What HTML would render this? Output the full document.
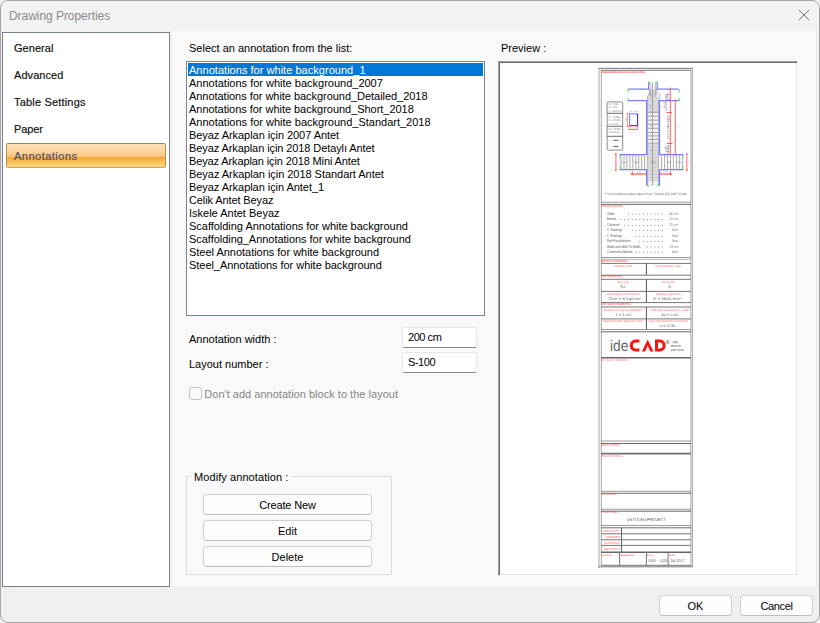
<!DOCTYPE html>
<html><head><meta charset="utf-8">
<style>
html,body{margin:0;padding:0;}
body{width:820px;height:623px;overflow:hidden;background:#efeff1;font-family:"Liberation Sans",sans-serif;position:relative;}
#win{position:absolute;left:0;top:0;width:818px;height:621px;border:1px solid #a6a6a6;border-radius:8px;background:#f0f0f0;overflow:hidden;}
#title{position:absolute;left:0;top:0;width:100%;height:30px;background:#f3f3f3;}
.t{position:absolute;white-space:nowrap;font-size:11px;line-height:13px;color:#000;transform-origin:0 0;}
.m{position:absolute;white-space:nowrap;font-size:11px;line-height:13px;color:#111;-webkit-text-stroke:0.18px #111;}
#left{position:absolute;left:1px;top:31px;width:166px;height:553px;border:1px solid #76808e;background:#fff;}
#sel{position:absolute;left:3px;top:110px;width:158px;height:23px;border:1px solid #b8924f;border-top-color:#a08460;border-bottom-color:#c9a468;border-radius:2px;
 background:linear-gradient(to bottom,#fddfb8 0,#fcd7a5 25%,#fbc683 55%,#f7a93a 57%,#f9b54a 70%,#fcca68 85%,#fdd67c 100%);}
#content{position:absolute;left:169px;top:30px;width:646px;height:556px;background:#f9f9f9;border-right:1px solid #e9e9e9;border-bottom:1px solid #e7e7e7;box-shadow:0 1px 0 #f6f6f6;}
#list{position:absolute;left:185px;top:60px;width:297px;height:253px;background:#fff;border:1px solid #7a8391;}
.row{position:absolute;left:1px;width:295px;height:13px;}
.btn{position:absolute;box-sizing:border-box;border:1px solid #d0d0d0;border-bottom-color:#bdbdbd;border-radius:4px;background:#fdfdfd;font-size:11px;line-height:13px;text-align:center;color:#000;}
.inp{position:absolute;box-sizing:border-box;border:1px solid #e6e6e6;border-bottom:1px solid #868686;border-radius:2px;background:#fff;}
</style></head><body>
<div id="win">
 <div id="title"></div>
 <div class="m" style="left:8px;top:8px;color:#8a8a8a;-webkit-text-stroke:0;font-size:12px;line-height:14px;letter-spacing:-0.05px;">Drawing Properties</div>
 <svg style="position:absolute;left:797px;top:8px" width="12" height="12" viewBox="0 0 12 12"><path d="M1 1 L11 11 M11 1 L1 11" stroke="#767676" stroke-width="1" fill="none"/></svg>

 <div id="content"><div style="position:absolute;left:1px;top:0;width:1px;height:100%;background:#e9e9e9;"></div></div>
 <div id="left">
  <div id="sel"></div>
  <div class="m" style="left:11px;top:9px;letter-spacing:0.04px;">General</div>
  <div class="m" style="left:11px;top:36px;letter-spacing:0.07px;">Advanced</div>
  <div class="m" style="left:11px;top:63px;letter-spacing:0.18px;">Table Settings</div>
  <div class="m" style="left:11px;top:90px;letter-spacing:-0.10px;">Paper</div>
  <div class="m" style="left:11px;top:117px;color:#4d4d55;-webkit-text-stroke-color:#4d4d55;letter-spacing:0.49px;">Annotations</div>
 </div>

 <div class="t" style="left:188px;top:41px;">Select an annotation from the list:</div>
 <div id="list">
  <div class="row" style="top:1px;background:#0078d7;"></div>
  <div class="t li" style="left:2px;top:2px;color:#fff;letter-spacing:0.030px;">Annotations for white background_1</div>
  <div class="t li" style="left:2px;top:15px;color:#000;">Annotations for white background_2007</div>
  <div class="t li" style="left:2px;top:28px;color:#000;letter-spacing:-0.040px;">Annotations for white background_Detailed_2018</div>
  <div class="t li" style="left:2px;top:41px;color:#000;letter-spacing:-0.035px;">Annotations for white background_Short_2018</div>
  <div class="t li" style="left:2px;top:54px;color:#000;">Annotations for white background_Standart_2018</div>
  <div class="t li" style="left:2px;top:67px;color:#000;letter-spacing:-0.053px;">Beyaz Arkaplan için 2007 Antet</div>
  <div class="t li" style="left:2px;top:80px;color:#000;letter-spacing:-0.090px;">Beyaz Arkaplan için 2018 Detaylı Antet</div>
  <div class="t li" style="left:2px;top:93px;color:#000;letter-spacing:-0.120px;">Beyaz Arkaplan için 2018 Mini Antet</div>
  <div class="t li" style="left:2px;top:106px;color:#000;letter-spacing:-0.040px;">Beyaz Arkaplan için 2018 Standart Antet</div>
  <div class="t li" style="left:2px;top:119px;color:#000;letter-spacing:-0.050px;">Beyaz Arkaplan için Antet_1</div>
  <div class="t li" style="left:2px;top:132px;color:#000;letter-spacing:-0.110px;">Celik Antet Beyaz</div>
  <div class="t li" style="left:2px;top:145px;color:#000;">Iskele Antet Beyaz</div>
  <div class="t li" style="left:2px;top:158px;color:#000;letter-spacing:-0.025px;">Scaffolding Annotations for white background</div>
  <div class="t li" style="left:2px;top:171px;color:#000;letter-spacing:-0.040px;">Scaffolding_Annotations for white background</div>
  <div class="t li" style="left:2px;top:184px;color:#000;letter-spacing:-0.020px;">Steel Annotations for white background</div>
  <div class="t li" style="left:2px;top:197px;color:#000;letter-spacing:-0.045px;">Steel_Annotations for white background</div>
 </div>

 <div class="t" style="left:188px;top:332px;">Annotation width :</div>
 <div class="t" style="left:188px;top:357px;">Layout number :</div>
 <div class="inp" style="left:401px;top:326px;width:75px;height:21px;"></div>
 <div class="inp" style="left:401px;top:351px;width:75px;height:21px;"></div>
 <div class="t" style="left:407px;top:330px;letter-spacing:-0.45px;">200 cm</div>
 <div class="t" style="left:407px;top:355px;letter-spacing:-0.45px;">S-100</div>

 <div style="position:absolute;left:188px;top:386px;width:11px;height:11px;border:1px solid #c4c4c4;border-radius:3px;background:#f9f9f9;"></div>
 <div class="t" style="left:203.3px;top:387px;color:#868686;letter-spacing:0.02px;">Don't add annotation block to the layout</div>

 <div style="position:absolute;left:185px;top:475px;width:204px;height:97px;border:1px solid #dcdcdc;"></div>
 <div class="t" style="left:190px;top:470px;background:#f9f9f9;padding:0 3px;letter-spacing:0.08px;">Modify annotation :</div>
 <div class="btn" style="left:202px;top:493px;width:169px;height:21px;padding-top:4px;letter-spacing:-0.15px;">Create New</div>
 <div class="btn" style="left:202px;top:519px;width:169px;height:21px;padding-top:4px;">Edit</div>
 <div class="btn" style="left:202px;top:545px;width:169px;height:21px;padding-top:4px;">Delete</div>

 <div class="t" style="left:500px;top:41px;">Preview :</div>
 <div id="prev" style="position:absolute;left:497px;top:60px;width:298px;height:513px;background:#fff;border:1px solid;border-color:#a0a0a0 #fff #fff #a0a0a0;box-shadow:inset 1px 1px 0 #696969,inset -1px -1px 0 #e3e3e3;"></div>

 <!--SVG-START--><svg style="position:absolute;left:-1px;top:-1px;text-rendering:geometricPrecision" width="820" height="623" viewBox="0 0 820 623" font-family="Liberation Sans">
<line x1="599.0" y1="68.0" x2="599.0" y2="567.0" stroke="#a6a6a6" stroke-width="1.00"/>
<line x1="692.4" y1="68.0" x2="692.4" y2="567.0" stroke="#a6a6a6" stroke-width="1.00"/>
<line x1="601.3" y1="70.0" x2="601.3" y2="565.5" stroke="#a6a6a6" stroke-width="1.00"/>
<line x1="690.9" y1="70.0" x2="690.9" y2="565.5" stroke="#a6a6a6" stroke-width="1.00"/>
<line x1="598.5" y1="68.3" x2="693.0" y2="68.3" stroke="#767676" stroke-width="1.00"/>
<line x1="601.0" y1="70.3" x2="691.0" y2="70.3" stroke="#767676" stroke-width="1.00"/>
<line x1="598.5" y1="566.8" x2="693.0" y2="566.8" stroke="#767676" stroke-width="1.00"/>
<line x1="601.0" y1="259.4" x2="691.0" y2="259.4" stroke="#b4b4b4" stroke-width="1.00"/>
<line x1="601.0" y1="202.2" x2="691.0" y2="202.2" stroke="#808080" stroke-width="0.80"/>
<line x1="601.0" y1="257.5" x2="691.0" y2="257.5" stroke="#808080" stroke-width="0.80"/>
<line x1="601.0" y1="329.5" x2="691.0" y2="329.5" stroke="#808080" stroke-width="0.80"/>
<line x1="601.0" y1="441.0" x2="691.0" y2="441.0" stroke="#808080" stroke-width="0.80"/>
<line x1="601.0" y1="491.3" x2="691.0" y2="491.3" stroke="#808080" stroke-width="0.80"/>
<line x1="601.0" y1="509.3" x2="691.0" y2="509.3" stroke="#808080" stroke-width="0.80"/>
<line x1="601.0" y1="525.5" x2="691.0" y2="525.5" stroke="#808080" stroke-width="0.80"/>
<line x1="601.0" y1="204.4" x2="691.0" y2="204.4" stroke="#505050" stroke-width="0.85"/>
<line x1="601.0" y1="331.8" x2="691.0" y2="331.8" stroke="#505050" stroke-width="0.85"/>
<line x1="601.0" y1="443.5" x2="691.0" y2="443.5" stroke="#505050" stroke-width="0.85"/>
<line x1="601.0" y1="493.3" x2="691.0" y2="493.3" stroke="#505050" stroke-width="0.85"/>
<line x1="601.0" y1="511.2" x2="691.0" y2="511.2" stroke="#505050" stroke-width="0.85"/>
<line x1="601.0" y1="527.8" x2="691.0" y2="527.8" stroke="#505050" stroke-width="0.85"/>
<line x1="601.0" y1="453.6" x2="691.0" y2="453.6" stroke="#707070" stroke-width="1.70"/>
<line x1="601.0" y1="357.7" x2="691.0" y2="357.7" stroke="#666" stroke-width="1.50"/>
<line x1="601.0" y1="263.4" x2="691.0" y2="263.4" stroke="#767676" stroke-width="1.00"/>
<line x1="601.0" y1="275.2" x2="691.0" y2="275.2" stroke="#767676" stroke-width="1.00"/>
<line x1="601.0" y1="279.3" x2="691.0" y2="279.3" stroke="#767676" stroke-width="1.00"/>
<line x1="601.0" y1="291.4" x2="691.0" y2="291.4" stroke="#767676" stroke-width="1.00"/>
<line x1="601.0" y1="302.6" x2="691.0" y2="302.6" stroke="#767676" stroke-width="1.00"/>
<line x1="601.0" y1="307.0" x2="691.0" y2="307.0" stroke="#767676" stroke-width="1.00"/>
<line x1="601.0" y1="318.9" x2="691.0" y2="318.9" stroke="#767676" stroke-width="1.00"/>
<line x1="601.0" y1="533.8" x2="691.0" y2="533.8" stroke="#767676" stroke-width="1.00"/>
<line x1="601.0" y1="539.8" x2="691.0" y2="539.8" stroke="#767676" stroke-width="1.00"/>
<line x1="601.0" y1="545.4" x2="691.0" y2="545.4" stroke="#767676" stroke-width="1.00"/>
<line x1="601.0" y1="565.3" x2="691.0" y2="565.3" stroke="#767676" stroke-width="1.00"/>
<line x1="601.0" y1="552.2" x2="691.0" y2="552.2" stroke="#666" stroke-width="1.40"/>
<line x1="646.4" y1="263.4" x2="646.4" y2="275.2" stroke="#555" stroke-width="1.00"/>
<line x1="646.4" y1="279.3" x2="646.4" y2="302.6" stroke="#555" stroke-width="1.00"/>
<line x1="646.4" y1="307.0" x2="646.4" y2="329.5" stroke="#555" stroke-width="1.00"/>
<line x1="621.5" y1="527.8" x2="621.5" y2="552.2" stroke="#666" stroke-width="1.00"/>
<line x1="619.6" y1="552.2" x2="619.6" y2="565.3" stroke="#777" stroke-width="1.00"/>
<line x1="646.4" y1="552.2" x2="646.4" y2="565.3" stroke="#777" stroke-width="1.00"/>
<line x1="668.1" y1="552.2" x2="668.1" y2="565.3" stroke="#777" stroke-width="1.00"/>
<text x="601.5" y="73.4" font-size="2.50" fill="#ff2020" textLength="43.5" lengthAdjust="spacingAndGlyphs" text-anchor="start" font-weight="bold" font-family="Liberation Sans">REINFORCEMENT DETAILS FOR COLUMN - FOOTING</text>
<polygon points="649.2,89.2 656.8,89.2 657.4,93 660,94.5 660,97.5 658.7,99.5 658.7,185.3 647.3,185.3 647.3,97 649.2,93" fill="#f0f0f0"/>
<rect x="647.9" y="113.0" width="10.3" height="30.0" fill="#f1f1f1"/>
<line x1="649.3" y1="90.2" x2="657.0" y2="90.2" stroke="#a2a2a2" stroke-width="0.45"/>
<line x1="649.3" y1="91.6" x2="657.0" y2="91.6" stroke="#a2a2a2" stroke-width="0.45"/>
<line x1="649.3" y1="93.0" x2="657.0" y2="93.0" stroke="#a2a2a2" stroke-width="0.45"/>
<line x1="649.3" y1="94.5" x2="657.0" y2="94.5" stroke="#a2a2a2" stroke-width="0.45"/>
<line x1="649.3" y1="95.9" x2="657.0" y2="95.9" stroke="#a2a2a2" stroke-width="0.45"/>
<line x1="647.6" y1="97.3" x2="658.5" y2="97.3" stroke="#a2a2a2" stroke-width="0.45"/>
<line x1="647.6" y1="98.7" x2="658.5" y2="98.7" stroke="#a2a2a2" stroke-width="0.45"/>
<line x1="647.6" y1="100.1" x2="658.5" y2="100.1" stroke="#a2a2a2" stroke-width="0.45"/>
<line x1="647.6" y1="101.6" x2="658.5" y2="101.6" stroke="#a2a2a2" stroke-width="0.45"/>
<line x1="647.6" y1="103.0" x2="658.5" y2="103.0" stroke="#a2a2a2" stroke-width="0.45"/>
<line x1="647.6" y1="104.4" x2="658.5" y2="104.4" stroke="#a2a2a2" stroke-width="0.45"/>
<line x1="647.6" y1="105.8" x2="658.5" y2="105.8" stroke="#a2a2a2" stroke-width="0.45"/>
<line x1="647.6" y1="107.2" x2="658.5" y2="107.2" stroke="#a2a2a2" stroke-width="0.45"/>
<line x1="647.6" y1="108.7" x2="658.5" y2="108.7" stroke="#a2a2a2" stroke-width="0.45"/>
<line x1="647.6" y1="110.1" x2="658.5" y2="110.1" stroke="#a2a2a2" stroke-width="0.45"/>
<line x1="647.6" y1="111.5" x2="658.5" y2="111.5" stroke="#a2a2a2" stroke-width="0.45"/>
<line x1="647.4" y1="112.4" x2="658.6" y2="112.4" stroke="#989898" stroke-width="0.90"/>
<line x1="647.4" y1="116.1" x2="658.6" y2="116.1" stroke="#989898" stroke-width="0.90"/>
<line x1="647.4" y1="120.1" x2="658.6" y2="120.1" stroke="#989898" stroke-width="0.90"/>
<line x1="647.4" y1="124.2" x2="658.6" y2="124.2" stroke="#989898" stroke-width="0.90"/>
<line x1="647.4" y1="128.3" x2="658.6" y2="128.3" stroke="#989898" stroke-width="0.90"/>
<line x1="647.4" y1="132.5" x2="658.6" y2="132.5" stroke="#989898" stroke-width="0.90"/>
<line x1="647.4" y1="135.9" x2="658.6" y2="135.9" stroke="#989898" stroke-width="0.90"/>
<line x1="647.4" y1="139.4" x2="658.6" y2="139.4" stroke="#989898" stroke-width="0.90"/>
<line x1="647.4" y1="143.2" x2="658.6" y2="143.2" stroke="#989898" stroke-width="0.90"/>
<line x1="647.6" y1="144.8" x2="658.5" y2="144.8" stroke="#a2a2a2" stroke-width="0.45"/>
<line x1="647.6" y1="146.2" x2="658.5" y2="146.2" stroke="#a2a2a2" stroke-width="0.45"/>
<line x1="647.6" y1="147.6" x2="658.5" y2="147.6" stroke="#a2a2a2" stroke-width="0.45"/>
<line x1="647.6" y1="149.1" x2="658.5" y2="149.1" stroke="#a2a2a2" stroke-width="0.45"/>
<line x1="647.6" y1="150.5" x2="658.5" y2="150.5" stroke="#a2a2a2" stroke-width="0.45"/>
<line x1="647.6" y1="151.9" x2="658.5" y2="151.9" stroke="#a2a2a2" stroke-width="0.45"/>
<line x1="647.6" y1="153.3" x2="658.5" y2="153.3" stroke="#a2a2a2" stroke-width="0.45"/>
<line x1="647.6" y1="154.7" x2="658.5" y2="154.7" stroke="#a2a2a2" stroke-width="0.45"/>
<line x1="647.6" y1="156.2" x2="658.5" y2="156.2" stroke="#a2a2a2" stroke-width="0.45"/>
<line x1="647.6" y1="157.6" x2="658.5" y2="157.6" stroke="#a2a2a2" stroke-width="0.45"/>
<line x1="647.6" y1="159.0" x2="658.5" y2="159.0" stroke="#a2a2a2" stroke-width="0.45"/>
<line x1="647.6" y1="160.4" x2="658.5" y2="160.4" stroke="#a2a2a2" stroke-width="0.45"/>
<line x1="647.6" y1="161.8" x2="658.5" y2="161.8" stroke="#a2a2a2" stroke-width="0.45"/>
<line x1="647.6" y1="163.3" x2="658.5" y2="163.3" stroke="#a2a2a2" stroke-width="0.45"/>
<line x1="647.6" y1="164.7" x2="658.5" y2="164.7" stroke="#a2a2a2" stroke-width="0.45"/>
<line x1="647.6" y1="166.1" x2="658.5" y2="166.1" stroke="#a2a2a2" stroke-width="0.45"/>
<line x1="647.6" y1="167.5" x2="658.5" y2="167.5" stroke="#a2a2a2" stroke-width="0.45"/>
<line x1="647.6" y1="168.9" x2="658.5" y2="168.9" stroke="#a2a2a2" stroke-width="0.45"/>
<line x1="647.6" y1="170.4" x2="658.5" y2="170.4" stroke="#a2a2a2" stroke-width="0.45"/>
<line x1="647.6" y1="171.8" x2="658.5" y2="171.8" stroke="#a2a2a2" stroke-width="0.45"/>
<line x1="647.6" y1="173.2" x2="658.5" y2="173.2" stroke="#a2a2a2" stroke-width="0.45"/>
<line x1="647.6" y1="174.6" x2="658.5" y2="174.6" stroke="#a2a2a2" stroke-width="0.45"/>
<line x1="647.6" y1="176.0" x2="658.5" y2="176.0" stroke="#a2a2a2" stroke-width="0.45"/>
<line x1="647.6" y1="177.5" x2="658.5" y2="177.5" stroke="#a2a2a2" stroke-width="0.45"/>
<line x1="647.6" y1="178.9" x2="658.5" y2="178.9" stroke="#a2a2a2" stroke-width="0.45"/>
<line x1="647.6" y1="180.3" x2="658.5" y2="180.3" stroke="#a2a2a2" stroke-width="0.45"/>
<polyline points="649.2,89.2 649.2,93 647.4,97" fill="none" stroke="#a0a0a0" stroke-width="0.7"/>
<polyline points="656.9,89.2 657.4,93 660,94.5 660,97.5 658.6,99.5" fill="none" stroke="#a8a8a8" stroke-width="0.7"/>
<line x1="647.4" y1="97.0" x2="647.4" y2="185.3" stroke="#a0a0a0" stroke-width="0.70"/>
<line x1="658.6" y1="99.0" x2="658.6" y2="185.3" stroke="#a0a0a0" stroke-width="0.70"/>
<line x1="652.5" y1="82.5" x2="652.5" y2="185.5" stroke="#909090" stroke-width="0.80"/>
<line x1="650.2" y1="82.5" x2="650.2" y2="97.0" stroke="#9a9a9a" stroke-width="0.70"/>
<line x1="655.3" y1="82.5" x2="655.3" y2="97.0" stroke="#9a9a9a" stroke-width="0.70"/>
<line x1="648.6" y1="82.3" x2="648.6" y2="89.2" stroke="#7c7cff" stroke-width="1.25"/>
<line x1="657.2" y1="82.3" x2="657.2" y2="89.2" stroke="#7c7cff" stroke-width="1.25"/>
<line x1="647.8" y1="82.4" x2="650.2" y2="82.4" stroke="#52e052" stroke-width="1.10"/>
<line x1="655.2" y1="82.4" x2="657.6" y2="82.4" stroke="#52e052" stroke-width="1.10"/>
<line x1="646.6" y1="100.2" x2="646.6" y2="154.6" stroke="#7c7cff" stroke-width="1.30"/>
<line x1="659.5" y1="100.2" x2="659.5" y2="154.6" stroke="#7c7cff" stroke-width="1.30"/>
<line x1="646.6" y1="169.6" x2="646.6" y2="185.6" stroke="#7c7cff" stroke-width="1.30"/>
<line x1="659.5" y1="169.6" x2="659.5" y2="185.6" stroke="#7c7cff" stroke-width="1.30"/>
<line x1="646.3" y1="185.8" x2="649.6" y2="185.8" stroke="#52e052" stroke-width="1.10"/>
<line x1="656.6" y1="185.8" x2="659.9" y2="185.8" stroke="#52e052" stroke-width="1.10"/>
<line x1="628.0" y1="89.2" x2="649.2" y2="89.2" stroke="#7c7cff" stroke-width="1.25"/>
<line x1="656.6" y1="89.2" x2="679.0" y2="89.2" stroke="#7c7cff" stroke-width="1.25"/>
<line x1="628.0" y1="100.7" x2="647.2" y2="100.7" stroke="#7c7cff" stroke-width="1.25"/>
<line x1="659.0" y1="100.7" x2="679.0" y2="100.7" stroke="#7c7cff" stroke-width="1.25"/>
<line x1="628.0" y1="89.5" x2="628.0" y2="92.5" stroke="#52e052" stroke-width="1.10"/>
<line x1="628.0" y1="98.3" x2="628.0" y2="101.2" stroke="#52e052" stroke-width="1.10"/>
<line x1="679.2" y1="89.5" x2="679.2" y2="92.5" stroke="#52e052" stroke-width="1.10"/>
<line x1="679.2" y1="98.3" x2="679.2" y2="101.2" stroke="#52e052" stroke-width="1.10"/>
<rect x="620.3" y="155.0" width="26.0" height="14.2" fill="#fcfcfc"/>
<rect x="660.0" y="155.0" width="23.0" height="14.2" fill="#fcfcfc"/>
<line x1="621.0" y1="155.0" x2="621.0" y2="169.2" stroke="#949494" stroke-width="0.75"/>
<line x1="624.0" y1="155.0" x2="624.0" y2="169.2" stroke="#949494" stroke-width="0.75"/>
<line x1="626.9" y1="155.0" x2="626.9" y2="169.2" stroke="#949494" stroke-width="0.75"/>
<line x1="629.9" y1="155.0" x2="629.9" y2="169.2" stroke="#949494" stroke-width="0.75"/>
<line x1="632.8" y1="155.0" x2="632.8" y2="169.2" stroke="#949494" stroke-width="0.75"/>
<line x1="635.8" y1="155.0" x2="635.8" y2="169.2" stroke="#949494" stroke-width="0.75"/>
<line x1="638.7" y1="155.0" x2="638.7" y2="169.2" stroke="#949494" stroke-width="0.75"/>
<line x1="641.7" y1="155.0" x2="641.7" y2="169.2" stroke="#949494" stroke-width="0.75"/>
<line x1="644.6" y1="155.0" x2="644.6" y2="169.2" stroke="#949494" stroke-width="0.75"/>
<line x1="661.6" y1="155.0" x2="661.6" y2="169.2" stroke="#949494" stroke-width="0.75"/>
<line x1="664.6" y1="155.0" x2="664.6" y2="169.2" stroke="#949494" stroke-width="0.75"/>
<line x1="667.5" y1="155.0" x2="667.5" y2="169.2" stroke="#949494" stroke-width="0.75"/>
<line x1="670.5" y1="155.0" x2="670.5" y2="169.2" stroke="#949494" stroke-width="0.75"/>
<line x1="673.4" y1="155.0" x2="673.4" y2="169.2" stroke="#949494" stroke-width="0.75"/>
<line x1="676.4" y1="155.0" x2="676.4" y2="169.2" stroke="#949494" stroke-width="0.75"/>
<line x1="679.3" y1="155.0" x2="679.3" y2="169.2" stroke="#949494" stroke-width="0.75"/>
<line x1="682.3" y1="155.0" x2="682.3" y2="169.2" stroke="#949494" stroke-width="0.75"/>
<line x1="619.5" y1="154.6" x2="647.0" y2="154.6" stroke="#7c7cff" stroke-width="1.30"/>
<line x1="659.0" y1="154.6" x2="683.4" y2="154.6" stroke="#7c7cff" stroke-width="1.30"/>
<line x1="619.5" y1="169.6" x2="647.0" y2="169.6" stroke="#7c7cff" stroke-width="1.30"/>
<line x1="659.0" y1="169.6" x2="683.4" y2="169.6" stroke="#7c7cff" stroke-width="1.30"/>
<line x1="620.0" y1="155.0" x2="620.0" y2="158.4" stroke="#60e060" stroke-width="0.90"/>
<line x1="620.0" y1="165.7" x2="620.0" y2="169.0" stroke="#60e060" stroke-width="0.90"/>
<line x1="620.0" y1="158.4" x2="620.0" y2="165.7" stroke="#d0d0f0" stroke-width="0.80"/>
<line x1="683.0" y1="155.0" x2="683.0" y2="158.4" stroke="#60e060" stroke-width="0.90"/>
<line x1="683.0" y1="165.7" x2="683.0" y2="169.0" stroke="#60e060" stroke-width="0.90"/>
<line x1="683.0" y1="158.4" x2="683.0" y2="165.7" stroke="#d0d0f0" stroke-width="0.80"/>
<text x="622.0" y="162.5" font-size="2.60" fill="#555" fill-opacity="0.70" textLength="4.5" lengthAdjust="spacingAndGlyphs" text-anchor="start" font-weight="normal" font-family="Liberation Sans">a1&#946;</text>
<text x="634.0" y="162.5" font-size="2.60" fill="#555" fill-opacity="0.70" textLength="4.5" lengthAdjust="spacingAndGlyphs" text-anchor="start" font-weight="normal" font-family="Liberation Sans">a1&#946;</text>
<text x="651.0" y="162.5" font-size="2.60" fill="#555" fill-opacity="0.70" textLength="4.5" lengthAdjust="spacingAndGlyphs" text-anchor="start" font-weight="normal" font-family="Liberation Sans">a1&#946;</text>
<text x="667.0" y="162.5" font-size="2.60" fill="#555" fill-opacity="0.70" textLength="4.5" lengthAdjust="spacingAndGlyphs" text-anchor="start" font-weight="normal" font-family="Liberation Sans">a1&#946;</text>
<text x="677.0" y="162.5" font-size="2.60" fill="#555" fill-opacity="0.70" textLength="4.5" lengthAdjust="spacingAndGlyphs" text-anchor="start" font-weight="normal" font-family="Liberation Sans">a1&#946;</text>
<line x1="615.9" y1="153.3" x2="615.9" y2="171.0" stroke="#ff2020" stroke-width="1.20" stroke-opacity="0.55"/>
<line x1="686.8" y1="153.3" x2="686.8" y2="171.0" stroke="#ff2020" stroke-width="1.20" stroke-opacity="0.55"/>
<path d="M615.9 152.8 l-0.8 2.2 h1.6 z M615.9 171.4 l-0.8 -2.2 h1.6 z" fill="#ff2020" fill-opacity="0.7"/>
<path d="M686.8 152.8 l-0.8 2.2 h1.6 z M686.8 171.4 l-0.8 -2.2 h1.6 z" fill="#ff2020" fill-opacity="0.7"/>
<text x="613.2" y="162.8" font-size="2.60" fill="#666" fill-opacity="0.70" text-anchor="start" font-weight="normal" font-family="Liberation Sans">h</text>
<text x="688.3" y="162.8" font-size="2.60" fill="#666" fill-opacity="0.70" text-anchor="start" font-weight="normal" font-family="Liberation Sans">h</text>
<line x1="630.5" y1="174.0" x2="646.2" y2="174.0" stroke="#ff2020" stroke-width="1.40" stroke-opacity="0.60"/>
<line x1="659.8" y1="174.0" x2="672.0" y2="174.0" stroke="#ff2020" stroke-width="1.40" stroke-opacity="0.60"/>
<line x1="632.3" y1="170.9" x2="632.3" y2="175.3" stroke="#ff2020" stroke-width="0.90" stroke-opacity="0.70"/>
<line x1="670.6" y1="170.9" x2="670.6" y2="175.3" stroke="#ff2020" stroke-width="0.90" stroke-opacity="0.70"/>
<text x="636.5" y="172.6" font-size="2.60" fill="#666" fill-opacity="0.80" textLength="4.2" lengthAdjust="spacingAndGlyphs" text-anchor="start" font-weight="normal" font-family="Liberation Sans">1.5</text>
<text x="663.0" y="172.2" font-size="2.60" fill="#666" fill-opacity="0.80" textLength="4.2" lengthAdjust="spacingAndGlyphs" text-anchor="start" font-weight="normal" font-family="Liberation Sans">1.5</text>
<line x1="670.3" y1="87.6" x2="670.3" y2="154.5" stroke="#ff2020" stroke-width="0.95" stroke-opacity="0.72"/>
<line x1="675.3" y1="99.6" x2="675.3" y2="154.5" stroke="#ff2020" stroke-width="0.95" stroke-opacity="0.72"/>
<line x1="666.3" y1="112.6" x2="672.2" y2="112.6" stroke="#ff2020" stroke-width="0.90" stroke-opacity="0.80"/>
<line x1="666.8" y1="143.4" x2="672.6" y2="143.4" stroke="#ff2020" stroke-width="0.90" stroke-opacity="0.80"/>
<text transform="translate(668.9 100.0) rotate(-90)" font-size="3.30" fill="#445" fill-opacity="1.00" textLength="7.5" lengthAdjust="spacingAndGlyphs">sarilma</text>
<text transform="translate(666.9 100.0) rotate(-90)" font-size="3.30" fill="#445" fill-opacity="0.90" textLength="6.5" lengthAdjust="spacingAndGlyphs">bolgesi</text>
<text transform="translate(666.9 110.5) rotate(-90)" font-size="3.30" fill="#445" fill-opacity="1.00" textLength="9.0" lengthAdjust="spacingAndGlyphs">Lo=50cm</text>
<text transform="translate(665.0 108.0) rotate(-90)" font-size="3.00" fill="#445" fill-opacity="0.70" textLength="6.0" lengthAdjust="spacingAndGlyphs">sarilm</text>
<text transform="translate(668.9 139.0) rotate(-90)" font-size="3.30" fill="#445" fill-opacity="0.95" textLength="23.0" lengthAdjust="spacingAndGlyphs">column middle region</text>
<text transform="translate(668.5 153.5) rotate(-90)" font-size="3.30" fill="#445" fill-opacity="1.00" textLength="8.5" lengthAdjust="spacingAndGlyphs">sarilma</text>
<text transform="translate(666.6 153.5) rotate(-90)" font-size="3.30" fill="#445" fill-opacity="0.90" textLength="7.0" lengthAdjust="spacingAndGlyphs">Lo=50</text>
<text x="671.3" y="108.0" font-size="2.40" fill="#666" fill-opacity="0.60" text-anchor="start" font-weight="normal" font-family="Liberation Sans">lo</text>
<text x="677.0" y="127.0" font-size="2.60" fill="#668" fill-opacity="0.60" text-anchor="start" font-weight="normal" font-family="Liberation Sans">lb</text>
<text x="671.5" y="149.5" font-size="2.40" fill="#666" fill-opacity="0.60" text-anchor="start" font-weight="normal" font-family="Liberation Sans">lo</text>
<text x="649.3" y="94.5" font-size="2.60" fill="#866" fill-opacity="0.70" text-anchor="start" font-weight="normal" font-family="Liberation Sans">&#216;</text>
<text x="649.3" y="106.5" font-size="2.60" fill="#866" fill-opacity="0.70" text-anchor="start" font-weight="normal" font-family="Liberation Sans">&#216;</text>
<text x="650.0" y="127.3" font-size="2.40" fill="#866" fill-opacity="0.60" text-anchor="start" font-weight="normal" font-family="Liberation Sans">&#216;</text>
<text x="650.0" y="151.3" font-size="2.40" fill="#866" fill-opacity="0.60" text-anchor="start" font-weight="normal" font-family="Liberation Sans">&#216;</text>
<text x="651.0" y="163.0" font-size="2.40" fill="#866" fill-opacity="0.60" text-anchor="start" font-weight="normal" font-family="Liberation Sans">&#216;</text>
<rect x="607.1" y="101.9" width="15.6" height="48.2" fill="none" stroke="#8a8a8a" stroke-width="1.00" rx="1.2"/>
<line x1="607.0" y1="113.3" x2="622.8" y2="113.3" stroke="#5e5e5e" stroke-width="0.90"/>
<line x1="607.0" y1="126.3" x2="622.8" y2="126.3" stroke="#5e5e5e" stroke-width="0.90"/>
<line x1="607.0" y1="136.3" x2="622.8" y2="136.3" stroke="#5e5e5e" stroke-width="0.90"/>
<text x="608.6" y="105.1" font-size="2.80" fill="#44445c" fill-opacity="0.80" textLength="10.0" lengthAdjust="spacingAndGlyphs" text-anchor="start" font-weight="normal" font-family="Liberation Sans">fck : 25 MPa</text>
<text x="608.6" y="108.4" font-size="2.80" fill="#44445c" fill-opacity="0.80" textLength="8.5" lengthAdjust="spacingAndGlyphs" text-anchor="start" font-weight="normal" font-family="Liberation Sans">fcd : 16.6</text>
<text x="608.6" y="112.0" font-size="2.80" fill="#44445c" fill-opacity="0.80" textLength="12.6" lengthAdjust="spacingAndGlyphs" text-anchor="start" font-weight="normal" font-family="Liberation Sans">Ec : 30000 MPa</text>
<text x="608.6" y="117.8" font-size="2.80" fill="#44445c" fill-opacity="0.80" textLength="11.5" lengthAdjust="spacingAndGlyphs" text-anchor="start" font-weight="normal" font-family="Liberation Sans">fyk : 420 MPa</text>
<text x="608.6" y="121.2" font-size="2.80" fill="#44445c" fill-opacity="0.80" textLength="11.8" lengthAdjust="spacingAndGlyphs" text-anchor="start" font-weight="normal" font-family="Liberation Sans">fyd : 365 MPa</text>
<text x="608.6" y="125.0" font-size="2.80" fill="#44445c" fill-opacity="0.80" textLength="10.5" lengthAdjust="spacingAndGlyphs" text-anchor="start" font-weight="normal" font-family="Liberation Sans">S420 Steel</text>
<text x="608.6" y="129.7" font-size="2.80" fill="#44445c" fill-opacity="0.80" textLength="12.0" lengthAdjust="spacingAndGlyphs" text-anchor="start" font-weight="normal" font-family="Liberation Sans">fyw : 420 MPa</text>
<text x="608.6" y="133.1" font-size="2.80" fill="#44445c" fill-opacity="0.80" textLength="11.2" lengthAdjust="spacingAndGlyphs" text-anchor="start" font-weight="normal" font-family="Liberation Sans">S420 Stirrups</text>
<text x="608.3" y="140.7" font-size="2.20" fill="#667" fill-opacity="0.60" text-anchor="start" font-weight="normal" font-family="Liberation Sans">a -</text>
<text x="608.3" y="146.8" font-size="2.20" fill="#667" fill-opacity="0.60" text-anchor="start" font-weight="normal" font-family="Liberation Sans">b -</text>
<line x1="613.2" y1="140.4" x2="618.6" y2="140.4" stroke="#333" stroke-width="0.75"/>
<line x1="613.2" y1="146.4" x2="618.6" y2="146.4" stroke="#333" stroke-width="0.75"/>
<text x="615.0" y="143.9" font-size="3.00" fill="#886" fill-opacity="0.70" text-anchor="start" font-weight="normal" font-family="Liberation Sans">~</text>
<rect x="629.6" y="113.8" width="8.0" height="11.8" fill="none" stroke="#8c8cff" stroke-width="1.20"/>
<line x1="637.5" y1="114.0" x2="637.5" y2="125.8" stroke="#4444c4" stroke-width="1.10"/>
<line x1="630.0" y1="125.5" x2="638.0" y2="125.5" stroke="#4444c4" stroke-width="1.10"/>
<line x1="627.4" y1="113.3" x2="627.4" y2="126.3" stroke="#ff2020" stroke-width="0.70" stroke-opacity="0.70"/>
<line x1="626.3" y1="113.4" x2="628.6" y2="113.4" stroke="#ff2020" stroke-width="0.60" stroke-opacity="0.70"/>
<line x1="626.3" y1="126.2" x2="628.6" y2="126.2" stroke="#ff2020" stroke-width="0.60" stroke-opacity="0.70"/>
<rect x="629.0" y="125.9" width="8.6" height="3.5" fill="none" stroke="#ff2020" stroke-width="0.75" opacity="0.80"/>
<text x="629.2" y="112.1" font-size="2.50" fill="#555" fill-opacity="0.75" textLength="8.6" lengthAdjust="spacingAndGlyphs" text-anchor="start" font-weight="normal" font-family="Liberation Sans">mm x mm</text>
<text x="631.0" y="128.6" font-size="2.20" fill="#665" fill-opacity="0.70" textLength="4.6" lengthAdjust="spacingAndGlyphs" text-anchor="start" font-weight="normal" font-family="Liberation Sans">b=50</text>
<text transform="translate(626.5 122.5) rotate(-90)" font-size="2.20" fill="#556" fill-opacity="0.70" textLength="5.0" lengthAdjust="spacingAndGlyphs">h=80</text>
<text x="636.0" y="115.8" font-size="1.80" fill="#555" fill-opacity="0.70" text-anchor="start" font-weight="normal" font-family="Liberation Sans">&#216;</text>
<text x="604.7" y="194.8" font-size="3.30" fill="#333" fill-opacity="0.85" textLength="82.0" lengthAdjust="spacingAndGlyphs" text-anchor="start" font-weight="normal" font-family="Liberation Sans">** All conditions were taken from Turkish EQ 2007 Code</text>
<text x="601.3" y="207.1" font-size="2.80" fill="#ff2020" textLength="21.5" lengthAdjust="spacingAndGlyphs" text-anchor="start" font-weight="normal" font-family="Liberation Sans">CONCRETE COVERS</text>
<text x="603.7" y="214.5" font-size="2.60" fill="#668" fill-opacity="0.60" text-anchor="start" font-weight="normal" font-family="Liberation Sans">&#8226;</text>
<text x="606.8" y="214.7" font-size="4.00" fill="#222" fill-opacity="0.85" textLength="7.5" lengthAdjust="spacingAndGlyphs" text-anchor="start" font-weight="normal" font-family="Liberation Sans">Slabs</text>
<text x="669.3" y="214.7" font-size="4.00" fill="#334" fill-opacity="0.75" textLength="8.8" lengthAdjust="spacingAndGlyphs" text-anchor="start" font-weight="normal" font-family="Liberation Sans">40 cm</text>
<rect x="661.8" y="213.6" width="0.9" height="0.9" fill="#444" opacity="0.75"/>
<rect x="658.0" y="213.6" width="0.9" height="0.9" fill="#444" opacity="0.75"/>
<rect x="654.3" y="213.6" width="0.9" height="0.9" fill="#444" opacity="0.75"/>
<rect x="650.5" y="213.6" width="0.9" height="0.9" fill="#444" opacity="0.75"/>
<rect x="646.8" y="213.6" width="0.9" height="0.9" fill="#444" opacity="0.75"/>
<rect x="643.0" y="213.6" width="0.9" height="0.9" fill="#444" opacity="0.75"/>
<rect x="639.3" y="213.6" width="0.9" height="0.9" fill="#444" opacity="0.75"/>
<rect x="635.5" y="213.6" width="0.9" height="0.9" fill="#444" opacity="0.75"/>
<rect x="631.8" y="213.6" width="0.9" height="0.9" fill="#444" opacity="0.75"/>
<rect x="628.0" y="213.6" width="0.9" height="0.9" fill="#444" opacity="0.75"/>
<text x="603.7" y="220.0" font-size="2.60" fill="#668" fill-opacity="0.60" text-anchor="start" font-weight="normal" font-family="Liberation Sans">&#8226;</text>
<text x="606.8" y="220.2" font-size="4.00" fill="#222" fill-opacity="0.85" textLength="9.1" lengthAdjust="spacingAndGlyphs" text-anchor="start" font-weight="normal" font-family="Liberation Sans">Beams</text>
<text x="669.3" y="220.2" font-size="4.00" fill="#334" fill-opacity="0.75" textLength="8.8" lengthAdjust="spacingAndGlyphs" text-anchor="start" font-weight="normal" font-family="Liberation Sans">20 cm</text>
<rect x="661.8" y="219.1" width="0.9" height="0.9" fill="#444" opacity="0.75"/>
<rect x="658.0" y="219.1" width="0.9" height="0.9" fill="#444" opacity="0.75"/>
<rect x="654.3" y="219.1" width="0.9" height="0.9" fill="#444" opacity="0.75"/>
<rect x="650.5" y="219.1" width="0.9" height="0.9" fill="#444" opacity="0.75"/>
<rect x="646.8" y="219.1" width="0.9" height="0.9" fill="#444" opacity="0.75"/>
<rect x="643.0" y="219.1" width="0.9" height="0.9" fill="#444" opacity="0.75"/>
<rect x="639.3" y="219.1" width="0.9" height="0.9" fill="#444" opacity="0.75"/>
<rect x="635.5" y="219.1" width="0.9" height="0.9" fill="#444" opacity="0.75"/>
<rect x="631.8" y="219.1" width="0.9" height="0.9" fill="#444" opacity="0.75"/>
<rect x="628.0" y="219.1" width="0.9" height="0.9" fill="#444" opacity="0.75"/>
<rect x="624.3" y="219.1" width="0.9" height="0.9" fill="#444" opacity="0.75"/>
<rect x="620.5" y="219.1" width="0.9" height="0.9" fill="#444" opacity="0.75"/>
<text x="603.7" y="225.7" font-size="2.60" fill="#668" fill-opacity="0.60" text-anchor="start" font-weight="normal" font-family="Liberation Sans">&#8226;</text>
<text x="606.8" y="225.9" font-size="4.00" fill="#222" fill-opacity="0.85" textLength="12.5" lengthAdjust="spacingAndGlyphs" text-anchor="start" font-weight="normal" font-family="Liberation Sans">Columns</text>
<text x="669.3" y="225.9" font-size="4.00" fill="#334" fill-opacity="0.75" textLength="8.8" lengthAdjust="spacingAndGlyphs" text-anchor="start" font-weight="normal" font-family="Liberation Sans">20 cm</text>
<rect x="661.8" y="224.8" width="0.9" height="0.9" fill="#444" opacity="0.75"/>
<rect x="658.0" y="224.8" width="0.9" height="0.9" fill="#444" opacity="0.75"/>
<rect x="654.3" y="224.8" width="0.9" height="0.9" fill="#444" opacity="0.75"/>
<rect x="650.5" y="224.8" width="0.9" height="0.9" fill="#444" opacity="0.75"/>
<rect x="646.8" y="224.8" width="0.9" height="0.9" fill="#444" opacity="0.75"/>
<rect x="643.0" y="224.8" width="0.9" height="0.9" fill="#444" opacity="0.75"/>
<rect x="639.3" y="224.8" width="0.9" height="0.9" fill="#444" opacity="0.75"/>
<rect x="635.5" y="224.8" width="0.9" height="0.9" fill="#444" opacity="0.75"/>
<rect x="631.8" y="224.8" width="0.9" height="0.9" fill="#444" opacity="0.75"/>
<rect x="628.0" y="224.8" width="0.9" height="0.9" fill="#444" opacity="0.75"/>
<rect x="624.3" y="224.8" width="0.9" height="0.9" fill="#444" opacity="0.75"/>
<text x="603.7" y="231.0" font-size="2.60" fill="#668" fill-opacity="0.60" text-anchor="start" font-weight="normal" font-family="Liberation Sans">&#8226;</text>
<text x="606.8" y="231.2" font-size="4.00" fill="#222" fill-opacity="0.85" textLength="15.3" lengthAdjust="spacingAndGlyphs" text-anchor="start" font-weight="normal" font-family="Liberation Sans">S. Footings</text>
<text x="671.9" y="231.2" font-size="4.00" fill="#334" fill-opacity="0.75" textLength="6.2" lengthAdjust="spacingAndGlyphs" text-anchor="start" font-weight="normal" font-family="Liberation Sans">5cm</text>
<rect x="661.8" y="230.1" width="0.9" height="0.9" fill="#444" opacity="0.75"/>
<rect x="658.0" y="230.1" width="0.9" height="0.9" fill="#444" opacity="0.75"/>
<rect x="654.3" y="230.1" width="0.9" height="0.9" fill="#444" opacity="0.75"/>
<rect x="650.5" y="230.1" width="0.9" height="0.9" fill="#444" opacity="0.75"/>
<rect x="646.8" y="230.1" width="0.9" height="0.9" fill="#444" opacity="0.75"/>
<rect x="643.0" y="230.1" width="0.9" height="0.9" fill="#444" opacity="0.75"/>
<rect x="639.3" y="230.1" width="0.9" height="0.9" fill="#444" opacity="0.75"/>
<rect x="635.5" y="230.1" width="0.9" height="0.9" fill="#444" opacity="0.75"/>
<rect x="631.8" y="230.1" width="0.9" height="0.9" fill="#444" opacity="0.75"/>
<text x="603.7" y="236.8" font-size="2.60" fill="#668" fill-opacity="0.60" text-anchor="start" font-weight="normal" font-family="Liberation Sans">&#8226;</text>
<text x="606.8" y="237.0" font-size="4.00" fill="#222" fill-opacity="0.85" textLength="15.3" lengthAdjust="spacingAndGlyphs" text-anchor="start" font-weight="normal" font-family="Liberation Sans">C. Footings</text>
<text x="671.9" y="237.0" font-size="4.00" fill="#334" fill-opacity="0.75" textLength="6.2" lengthAdjust="spacingAndGlyphs" text-anchor="start" font-weight="normal" font-family="Liberation Sans">5cm</text>
<rect x="661.8" y="235.9" width="0.9" height="0.9" fill="#444" opacity="0.75"/>
<rect x="658.0" y="235.9" width="0.9" height="0.9" fill="#444" opacity="0.75"/>
<rect x="654.3" y="235.9" width="0.9" height="0.9" fill="#444" opacity="0.75"/>
<rect x="650.5" y="235.9" width="0.9" height="0.9" fill="#444" opacity="0.75"/>
<rect x="646.8" y="235.9" width="0.9" height="0.9" fill="#444" opacity="0.75"/>
<rect x="643.0" y="235.9" width="0.9" height="0.9" fill="#444" opacity="0.75"/>
<rect x="639.3" y="235.9" width="0.9" height="0.9" fill="#444" opacity="0.75"/>
<rect x="635.5" y="235.9" width="0.9" height="0.9" fill="#444" opacity="0.75"/>
<text x="603.7" y="242.1" font-size="2.60" fill="#668" fill-opacity="0.60" text-anchor="start" font-weight="normal" font-family="Liberation Sans">&#8226;</text>
<text x="606.8" y="242.3" font-size="4.00" fill="#222" fill-opacity="0.85" textLength="23.7" lengthAdjust="spacingAndGlyphs" text-anchor="start" font-weight="normal" font-family="Liberation Sans">Raft Foundations</text>
<text x="671.9" y="242.3" font-size="4.00" fill="#334" fill-opacity="0.75" textLength="6.2" lengthAdjust="spacingAndGlyphs" text-anchor="start" font-weight="normal" font-family="Liberation Sans">5cm</text>
<rect x="661.8" y="241.2" width="0.9" height="0.9" fill="#444" opacity="0.75"/>
<rect x="658.0" y="241.2" width="0.9" height="0.9" fill="#444" opacity="0.75"/>
<rect x="654.3" y="241.2" width="0.9" height="0.9" fill="#444" opacity="0.75"/>
<rect x="650.5" y="241.2" width="0.9" height="0.9" fill="#444" opacity="0.75"/>
<rect x="646.8" y="241.2" width="0.9" height="0.9" fill="#444" opacity="0.75"/>
<rect x="643.0" y="241.2" width="0.9" height="0.9" fill="#444" opacity="0.75"/>
<rect x="639.3" y="241.2" width="0.9" height="0.9" fill="#444" opacity="0.75"/>
<text x="603.7" y="247.4" font-size="2.60" fill="#668" fill-opacity="0.60" text-anchor="start" font-weight="normal" font-family="Liberation Sans">&#8226;</text>
<text x="606.8" y="247.6" font-size="4.00" fill="#222" fill-opacity="0.85" textLength="33.6" lengthAdjust="spacingAndGlyphs" text-anchor="start" font-weight="normal" font-family="Liberation Sans">Walls and Wall-To Walls</text>
<text x="669.8" y="247.6" font-size="4.00" fill="#334" fill-opacity="0.75" textLength="8.3" lengthAdjust="spacingAndGlyphs" text-anchor="start" font-weight="normal" font-family="Liberation Sans">53 cm</text>
<rect x="661.8" y="246.5" width="0.9" height="0.9" fill="#444" opacity="0.75"/>
<rect x="658.0" y="246.5" width="0.9" height="0.9" fill="#444" opacity="0.75"/>
<rect x="654.3" y="246.5" width="0.9" height="0.9" fill="#444" opacity="0.75"/>
<rect x="650.5" y="246.5" width="0.9" height="0.9" fill="#444" opacity="0.75"/>
<rect x="646.8" y="246.5" width="0.9" height="0.9" fill="#444" opacity="0.75"/>
<text x="603.7" y="252.7" font-size="2.60" fill="#668" fill-opacity="0.60" text-anchor="start" font-weight="normal" font-family="Liberation Sans">&#8226;</text>
<text x="606.8" y="252.9" font-size="4.00" fill="#222" fill-opacity="0.85" textLength="25.5" lengthAdjust="spacingAndGlyphs" text-anchor="start" font-weight="normal" font-family="Liberation Sans">Connection Beams</text>
<text x="671.9" y="252.9" font-size="4.00" fill="#334" fill-opacity="0.75" textLength="6.2" lengthAdjust="spacingAndGlyphs" text-anchor="start" font-weight="normal" font-family="Liberation Sans">5cm</text>
<rect x="661.8" y="251.8" width="0.9" height="0.9" fill="#444" opacity="0.75"/>
<rect x="658.0" y="251.8" width="0.9" height="0.9" fill="#444" opacity="0.75"/>
<rect x="654.3" y="251.8" width="0.9" height="0.9" fill="#444" opacity="0.75"/>
<rect x="650.5" y="251.8" width="0.9" height="0.9" fill="#444" opacity="0.75"/>
<rect x="646.8" y="251.8" width="0.9" height="0.9" fill="#444" opacity="0.75"/>
<rect x="643.0" y="251.8" width="0.9" height="0.9" fill="#444" opacity="0.75"/>
<rect x="639.3" y="251.8" width="0.9" height="0.9" fill="#444" opacity="0.75"/>
<rect x="635.5" y="251.8" width="0.9" height="0.9" fill="#444" opacity="0.75"/>
<text x="601.3" y="262.0" font-size="2.80" fill="#ff2020" textLength="26.0" lengthAdjust="spacingAndGlyphs" text-anchor="start" font-weight="normal" font-family="Liberation Sans">MATERIAL INFORMATION</text>
<text x="613.7" y="266.6" font-size="3.10" fill="#ff2020" fill-opacity="0.75" textLength="18.3" lengthAdjust="spacingAndGlyphs" text-anchor="start" font-weight="normal" font-family="Liberation Sans">Concrete Type</text>
<text x="655.0" y="266.6" font-size="3.10" fill="#ff2020" fill-opacity="0.75" textLength="25.8" lengthAdjust="spacingAndGlyphs" text-anchor="start" font-weight="normal" font-family="Liberation Sans">Reinforcement Type</text>
<text x="601.3" y="276.9" font-size="2.80" fill="#ff2020" textLength="20.5" lengthAdjust="spacingAndGlyphs" text-anchor="start" font-weight="normal" font-family="Liberation Sans">SOIL PARAMETERS</text>
<text x="617.4" y="282.6" font-size="3.10" fill="#ff2020" fill-opacity="0.75" textLength="11.8" lengthAdjust="spacingAndGlyphs" text-anchor="start" font-weight="normal" font-family="Liberation Sans">Soil Type</text>
<text x="662.2" y="282.6" font-size="3.10" fill="#ff2020" fill-opacity="0.75" textLength="12.4" lengthAdjust="spacingAndGlyphs" text-anchor="start" font-weight="normal" font-family="Liberation Sans">Soil Group</text>
<text x="620.5" y="288.0" font-size="3.90" fill="#222" fill-opacity="0.75" textLength="4.4" lengthAdjust="spacingAndGlyphs" text-anchor="start" font-weight="normal" font-family="Liberation Sans">Ea</text>
<text x="668.0" y="288.0" font-size="3.90" fill="#222" fill-opacity="0.75" textLength="3.0" lengthAdjust="spacingAndGlyphs" text-anchor="start" font-weight="normal" font-family="Liberation Sans">A</text>
<text x="606.8" y="295.0" font-size="3.10" fill="#ff2020" fill-opacity="0.75" textLength="33.0" lengthAdjust="spacingAndGlyphs" text-anchor="start" font-weight="normal" font-family="Liberation Sans">Allowable Ground Stress</text>
<text x="656.0" y="295.0" font-size="3.10" fill="#ff2020" fill-opacity="0.75" textLength="24.6" lengthAdjust="spacingAndGlyphs" text-anchor="start" font-weight="normal" font-family="Liberation Sans">Bedding Coefficient</text>
<text x="608.4" y="300.0" font-size="3.90" fill="#222" fill-opacity="0.75" textLength="32.6" lengthAdjust="spacingAndGlyphs" text-anchor="start" font-weight="normal" font-family="Liberation Sans">Zem = 6 kgf/cm&#178;</text>
<text x="653.2" y="300.0" font-size="3.90" fill="#222" fill-opacity="0.75" textLength="28.2" lengthAdjust="spacingAndGlyphs" text-anchor="start" font-weight="normal" font-family="Liberation Sans">K = 2500 tf/m&#179;</text>
<text x="601.3" y="305.2" font-size="2.80" fill="#ff2020" textLength="29.5" lengthAdjust="spacingAndGlyphs" text-anchor="start" font-weight="normal" font-family="Liberation Sans">EARTHQUAKE PARAMETERS</text>
<text x="603.7" y="311.3" font-size="3.10" fill="#ff2020" fill-opacity="0.75" textLength="38.6" lengthAdjust="spacingAndGlyphs" text-anchor="start" font-weight="normal" font-family="Liberation Sans">Building Importance Coefficient</text>
<text x="651.0" y="311.3" font-size="3.10" fill="#ff2020" fill-opacity="0.75" textLength="38.0" lengthAdjust="spacingAndGlyphs" text-anchor="start" font-weight="normal" font-family="Liberation Sans">Effective Ground Acc. Coeff</text>
<text x="616.0" y="316.0" font-size="3.90" fill="#222" fill-opacity="0.75" textLength="15.0" lengthAdjust="spacingAndGlyphs" text-anchor="start" font-weight="normal" font-family="Liberation Sans">I = 1.00</text>
<text x="661.0" y="316.0" font-size="3.90" fill="#222" fill-opacity="0.75" textLength="17.3" lengthAdjust="spacingAndGlyphs" text-anchor="start" font-weight="normal" font-family="Liberation Sans">Ao = 0.40</text>
<text x="603.0" y="322.4" font-size="3.10" fill="#ff2020" fill-opacity="0.75" textLength="40.5" lengthAdjust="spacingAndGlyphs" text-anchor="start" font-weight="normal" font-family="Liberation Sans">Bearing System Behavior Coeff.</text>
<text x="648.2" y="322.4" font-size="3.10" fill="#ff2020" fill-opacity="0.75" textLength="39.5" lengthAdjust="spacingAndGlyphs" text-anchor="start" font-weight="normal" font-family="Liberation Sans">Live Load Reduction Coefficient</text>
<text x="659.4" y="327.0" font-size="3.90" fill="#222" fill-opacity="0.75" textLength="16.2" lengthAdjust="spacingAndGlyphs" text-anchor="start" font-weight="normal" font-family="Liberation Sans">n = 0.30</text>
<text x="610.0" y="351.2" font-size="15.60" fill="#3a3a3a" fill-opacity="0.80" textLength="18.3" lengthAdjust="spacingAndGlyphs" text-anchor="start" font-weight="normal" font-family="Liberation Sans">ide</text>
<g fill="#f51616"><path d="M639.4 339.6 h-3.9 a5.8 5.9 0 0 0 0 11.8 h3.9 v-3 h-3.6 a2.9 2.9 0 0 1 0 -5.8 h3.6 z"/><path d="M641.9 351.4 l5.8 -12 l5.8 12 h-3.3 l-2.5 -5.6 l-2.5 5.6 z"/><path d="M655 339.6 h4.9 a5.8 5.9 0 0 1 0 11.8 h-4.9 z M658 342.6 v5.8 h1.7 a2.9 2.9 0 0 0 0 -5.8 z" fill-rule="evenodd"/></g>
<text x="665.6" y="344.0" font-size="5.80" fill="#333" fill-opacity="0.90" text-anchor="start" font-weight="normal" font-family="Liberation Sans">&#174;</text>
<text x="672.5" y="342.8" font-size="3.90" fill="#222" fill-opacity="0.85" textLength="6.0" lengthAdjust="spacingAndGlyphs" text-anchor="start" font-weight="normal" font-family="Liberation Sans">yap&#305;</text>
<text x="670.5" y="346.6" font-size="3.90" fill="#222" fill-opacity="0.85" textLength="10.5" lengthAdjust="spacingAndGlyphs" text-anchor="start" font-weight="normal" font-family="Liberation Sans">tasar&#305;m</text>
<text x="671.0" y="350.6" font-size="3.90" fill="#222" fill-opacity="0.85" textLength="13.0" lengthAdjust="spacingAndGlyphs" text-anchor="start" font-weight="normal" font-family="Liberation Sans">plat-form</text>
<text x="601.3" y="360.5" font-size="2.80" fill="#ff2020" fill-opacity="0.75" textLength="26.5" lengthAdjust="spacingAndGlyphs" text-anchor="start" font-weight="normal" font-family="Liberation Sans">REVISION - REMARKS</text>
<text x="601.3" y="445.5" font-size="2.80" fill="#ff2020" fill-opacity="0.90" textLength="18.5" lengthAdjust="spacingAndGlyphs" text-anchor="start" font-weight="normal" font-family="Liberation Sans">PROJECT OWNER</text>
<text x="601.3" y="457.2" font-size="2.80" fill="#ff2020" fill-opacity="0.85" textLength="21.5" lengthAdjust="spacingAndGlyphs" text-anchor="start" font-weight="normal" font-family="Liberation Sans">PROJECT ADDRESS</text>
<text x="601.3" y="495.4" font-size="2.80" fill="#ff2020" fill-opacity="0.80" textLength="15.5" lengthAdjust="spacingAndGlyphs" text-anchor="start" font-weight="normal" font-family="Liberation Sans">LOCATION</text>
<text x="601.3" y="512.9" font-size="2.80" fill="#ff2020" fill-opacity="0.90" textLength="16.5" lengthAdjust="spacingAndGlyphs" text-anchor="start" font-weight="normal" font-family="Liberation Sans">PROJECT NAME</text>
<text x="626.7" y="521.0" font-size="4.20" fill="#334" fill-opacity="0.95" textLength="38.9" lengthAdjust="spacingAndGlyphs" text-anchor="start" font-weight="normal" font-family="Liberation Sans">UNTITLED PROJECT</text>
<text x="602.7" y="532.1" font-size="3.00" fill="#ff2020" fill-opacity="0.85" textLength="17.3" lengthAdjust="spacingAndGlyphs" text-anchor="start" font-weight="normal" font-family="Liberation Sans">APPLICANT</text>
<text x="606.0" y="538.1" font-size="3.00" fill="#ff2020" fill-opacity="0.85" textLength="14.0" lengthAdjust="spacingAndGlyphs" text-anchor="start" font-weight="normal" font-family="Liberation Sans">DRAWER</text>
<text x="604.0" y="543.9" font-size="3.00" fill="#ff2020" fill-opacity="0.85" textLength="16.0" lengthAdjust="spacingAndGlyphs" text-anchor="start" font-weight="normal" font-family="Liberation Sans">CONTROL</text>
<text x="603.6" y="549.8" font-size="3.00" fill="#ff2020" fill-opacity="0.85" textLength="16.4" lengthAdjust="spacingAndGlyphs" text-anchor="start" font-weight="normal" font-family="Liberation Sans">ARCHITECT</text>
<text x="601.3" y="556.0" font-size="2.20" fill="#ff2020" fill-opacity="0.90" textLength="10.7" lengthAdjust="spacingAndGlyphs" text-anchor="start" font-weight="bold" font-family="Liberation Sans">LAYOUT NO</text>
<text x="620.2" y="556.0" font-size="2.20" fill="#ff2020" fill-opacity="0.90" textLength="14.4" lengthAdjust="spacingAndGlyphs" text-anchor="start" font-weight="bold" font-family="Liberation Sans">REVISION NO</text>
<text x="647.0" y="556.0" font-size="2.20" fill="#ff2020" fill-opacity="0.90" textLength="5.6" lengthAdjust="spacingAndGlyphs" text-anchor="start" font-weight="bold" font-family="Liberation Sans">SCALE</text>
<text x="669.0" y="556.0" font-size="2.20" fill="#ff2020" fill-opacity="0.90" textLength="5.6" lengthAdjust="spacingAndGlyphs" text-anchor="start" font-weight="bold" font-family="Liberation Sans">DATE</text>
<text x="648.0" y="562.0" font-size="4.00" fill="#334" fill-opacity="0.90" textLength="19.3" lengthAdjust="spacingAndGlyphs" text-anchor="start" font-weight="normal" font-family="Liberation Sans">1/50 - 1/20</text>
<text x="670.2" y="562.0" font-size="4.00" fill="#334" fill-opacity="0.85" textLength="15.0" lengthAdjust="spacingAndGlyphs" text-anchor="start" font-weight="normal" font-family="Liberation Sans">24.2017</text>
<rect x="598.2" y="567.0" width="1.0" height="1.0" fill="#6a4ad0" opacity="0.90"/>
</svg><!--SVG-END-->

 <div class="btn" style="left:658px;top:594px;width:73px;height:21px;padding-top:4px;">OK</div>
 <div class="btn" style="left:739px;top:594px;width:73px;height:21px;padding-top:4px;letter-spacing:-0.4px;">Cancel</div>
</div>
</body></html>
